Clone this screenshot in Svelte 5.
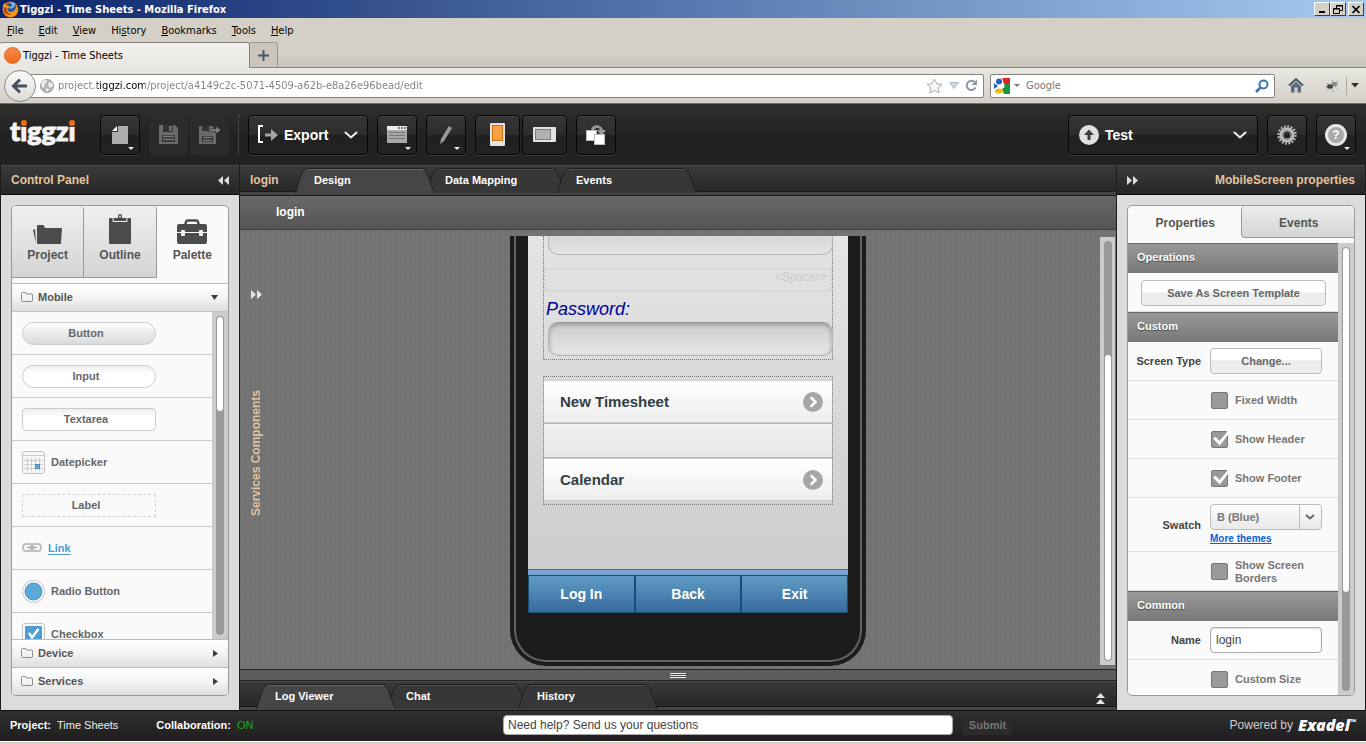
<script lang="ts">
  const menus = ['File', 'Edit', 'View', 'History', 'Bookmarks', 'Tools', 'Help'];
  // index of the underlined access key in each menu name
  const accessKeys = [0, 0, 0, 2, 0, 0, 0];

  const editorTabs = ['Design', 'Data Mapping', 'Events'];
  const logTabs = ['Log Viewer', 'Chat', 'History'];
  const phoneActions = ['Log In', 'Back', 'Exit'];

  let editorTab = $state('Design');
  let logTab = $state('Log Viewer');
  let name = $state('login');
  let fixedWidth = $state(false);
  let showHeader = $state(true);
  let showFooter = $state(true);
  let showBorders = $state(false);
  let customSize = $state(false);
</script>

{#snippet slantTab(label: string, active: boolean, onclick: () => void)}
  <button type="button" class="slant" class:active {onclick}>
    <svg width="140" height="25" viewBox="0 0 140 25" aria-hidden="true">
      <path class="shape" d="M0 25 C3 21 5 4 10 1.5 Q11 .5 14 .5 H126 Q129 .5 130 2 C134 7 136 20 140 25" />
      <path class="shine" d="M12 1.5 H128" />
    </svg>
    <span>{label}</span>
  </button>
{/snippet}

{#snippet folder()}
  <svg class="folder" width="12" height="10" viewBox="0 0 12 10" aria-hidden="true">
    <path d="M1.5 9.5 Q.5 9.5 .5 8.5 V1.5 Q.5 .5 1.5 .5 H4 Q5 .5 5.5 2 H10.5 Q11.5 2 11.5 3 V8.5 Q11.5 9.5 10.5 9.5 Z" fill="none" stroke="#8c8c8c" />
  </svg>
{/snippet}

{#snippet chevron()}
  <svg width="14" height="8" viewBox="0 0 14 8" aria-hidden="true">
    <path d="M1.5 1.5 L7 6.5 L12.5 1.5" fill="none" stroke="#f2f2f2" stroke-width="2" stroke-linecap="round" />
  </svg>
{/snippet}

{#snippet listArrow()}
  <svg width="20" height="20" viewBox="0 0 20 20" aria-hidden="true">
    <circle cx="10" cy="10" r="10" fill="#a6a6a6" />
    <path d="M8.5 6 L12.5 10 L8.5 14" fill="none" stroke="#fff" stroke-width="2.5" stroke-linecap="round" />
  </svg>
{/snippet}

<div class="window">
  <div class="titlebar">
    <svg width="17" height="17" viewBox="0 0 17 17" aria-hidden="true">
      <circle cx="8.5" cy="8.5" r="8" fill="#e36a10" />
      <circle cx="9" cy="7" r="5.5" fill="#27549c" />
      <path d="M7 2 Q11 3 10 5 L7 6 L9 8 L12 6 Q14 4 12 2 Q9 0 7 2" fill="#7cb8e8" />
      <path d="M1 4 L3 2 L4 4 L7 5 L7 7 L5 8 Q6 11 9 11 Q14 11 14 4 L16 8 Q15 15 9 16 Q2 16 1 9 Z" fill="#f39a1c" />
      <path d="M2 6 L5 7 L4 9 Q6 13 10 13 Q5 15 2 11 Z" fill="#b63d0c" />
    </svg>
    <h1>Tiggzi - Time Sheets - Mozilla Firefox</h1>
    <div class="controls">
      <button type="button" aria-label="Minimize"><svg width="10" height="9"><path d="M2 7 h6" stroke="#000" stroke-width="2" /></svg></button>
      <button type="button" aria-label="Restore"><svg width="10" height="9" viewBox="0 0 10 9"><path d="M3.5 3 V.5 H9.5 V5.5 H7 M3 1 H10 M.5 3.5 H6.5 V8.5 H.5 Z M0 4 H7" fill="none" stroke="#000" /></svg></button>
      <button type="button" aria-label="Close" class="close"><svg width="10" height="9" viewBox="0 0 10 9"><path d="M1.5 1 L8.5 8 M8.5 1 L1.5 8" stroke="#000" stroke-width="1.7" /></svg></button>
    </div>
  </div>

  <nav class="menubar">
    {#each menus as menu, i}
      <button type="button">{menu.slice(0, accessKeys[i])}<u>{menu[accessKeys[i]]}</u>{menu.slice(accessKeys[i] + 1)}</button>
    {/each}
  </nav>

  <div class="browser-tabs">
    <button type="button" class="browser-tab"><span class="favicon"></span>Tiggzi - Time Sheets</button>
    <button type="button" class="new-tab" aria-label="New tab">
      <svg width="11" height="11"><path d="M5.5 0 V11 M0 5.5 H11" stroke="#4a5566" stroke-width="2" /></svg>
    </button>
  </div>

  <div class="navbar">
    <button type="button" class="back" aria-label="Back">
      <svg width="18" height="16" viewBox="0 0 18 16"><path d="M9 1.5 L2.5 8 L9 14.5 M3 8 H16" fill="none" stroke="#46505f" stroke-width="3" /></svg>
    </button>
    <div class="urlbar">
      <svg width="14" height="14" viewBox="0 0 14 14" aria-hidden="true">
        <circle cx="7" cy="7" r="6.5" fill="#b4b4b4" stroke="#999" />
        <path d="M2 3 Q5 0 7 1 L6 4 L4 5 L5 7 L3 9 L1 6 Z M9 3 L12 4 L13 7 L10 9 L8 6 Z M6 9 L9 10 L8 13 L6 12 Z" fill="#eee" />
      </svg>
      <input aria-label="Address" value="project.tiggzi.com/project/a4149c2c-5071-4509-a62b-e8a26e96bead/edit" />
      <svg width="17" height="16" viewBox="0 0 17 16" aria-hidden="true"><path d="M8.5 1 L10.7 5.7 L16 6.3 L12 9.8 L13.2 15 L8.5 12.3 L3.8 15 L5 9.8 L1 6.3 L6.3 5.7 Z" fill="#fafafa" stroke="#aaa" /></svg>
      <svg width="10" height="7" viewBox="0 0 10 7" aria-hidden="true"><path d="M.5 .5 H9.5 L5 6.5 Z" fill="#cfd8e0" stroke="#aeb8c0" /></svg>
      <svg width="13" height="13" viewBox="0 0 13 13" aria-hidden="true"><path d="M10.5 8.5 A4.6 4.6 0 1 1 9.5 3" fill="none" stroke="#8b98a5" stroke-width="2" /><path d="M12 .5 V6 H6.5 Z" fill="#8b98a5" /></svg>
    </div>
    <div class="searchbar">
      <svg width="16" height="16" viewBox="0 0 16 16" aria-hidden="true">
        <rect width="16" height="16" fill="#fff" />
        <path d="M8 0 H16 V6 H10 Z" fill="#e32222" />
        <path d="M7 7 L16 5 V16 H10 Z" fill="#18983a" />
        <path d="M0 5 L4 8 L0 11 Z" fill="#1f5fc4" />
        <circle cx="5" cy="3.5" r="3" fill="#1f5fc4" />
        <circle cx="8" cy="8" r="2.5" fill="#fff" />
        <ellipse cx="5" cy="13" rx="4" ry="2.5" fill="#f6b817" />
      </svg>
      <svg width="6" height="3"><path d="M0 0 H6 L3 3 Z" fill="#777" /></svg>
      <input aria-label="Search" placeholder="Google" />
      <svg width="14" height="14" viewBox="0 0 14 14" aria-hidden="true"><circle cx="8.5" cy="5.5" r="4" fill="none" stroke="#3a76b0" stroke-width="2" /><path d="M5.5 8.5 L1 13" stroke="#3a76b0" stroke-width="2.5" /></svg>
    </div>
    <button type="button" class="plain" aria-label="Home">
      <svg width="16" height="15" viewBox="0 0 16 15"><path d="M1 7.5 L8 1.2 L15 7.5" fill="none" stroke="#4b5563" stroke-width="2" /><path d="M3 8 L8 3.7 L13 8 V14.5 H9.5 V9.5 H6.5 V14.5 H3 Z" fill="#5d6a7a" /></svg>
    </button>
    <div class="bug">
      <svg width="16" height="14" viewBox="0 0 16 14" aria-hidden="true">
        <path d="M1 8 L6 7 L3 12 M7 8 L9 13 M6 6 L2 4 M10 7 L14 10 M9 5 L8 1 M11 4 L15 2" fill="none" stroke="#a8a8a8" />
        <ellipse cx="6" cy="7.5" rx="3" ry="2.2" fill="#444" /><ellipse cx="10.5" cy="5" rx="3" ry="2" fill="#888" />
      </svg>
      <span></span>
      <svg width="8" height="5" aria-hidden="true"><path d="M0 0 H8 L4 4.5 Z" fill="#333" /></svg>
    </div>
  </div>

  <header class="toolbar">
    <div class="logo">t<span>i</span>ggz<span>i</span></div>
    <button type="button" class="tool" aria-label="New">
      <svg width="16" height="18" viewBox="0 0 16 18"><path d="M6 0 H16 V18 H0 V6 H6 Z" fill="#adadad" /><path d="M5 0 V5 H0 Z" fill="#fff" /></svg>
      <i class="more"></i>
    </button>
    <div class="pair">
      <button type="button" class="tool dim" aria-label="Save">
        <svg width="19" height="19" viewBox="0 0 19 19"><path d="M0 0 H16 L19 3 V19 H0 Z" fill="#6a6a6a" /><path d="M4 0 H14 V7 H4 Z" fill="#333" /><path d="M10 1 H13 V6 H10 Z" fill="#6a6a6a" /><path d="M3 10 H16 V17 H3 Z" fill="#333" /><path d="M4 11.5 H15 M4 14.5 H15" stroke="#777" stroke-width="1.5" /></svg>
      </button>
      <button type="button" class="tool dim" aria-label="Save as">
        <svg width="22" height="19" viewBox="0 0 22 19"><path d="M0 1 H14 L17 8 V19 H0 Z" fill="#6a6a6a" /><path d="M3 1 H10 V6 H3 Z M3 11 H14 V17 H3 Z" fill="#333" /><path d="M4 12.5 H13 M4 15.5 H13" stroke="#777" stroke-width="1.5" /><path d="M10 4 H17 V1 L22 5 L17 9 V6.500 H10 Z" fill="#858585" stroke="#2c2c2c" stroke-width=".6" /></svg>
      </button>
    </div>
    <span class="divider"></span>
    <button type="button" class="tool export">
      <svg width="20" height="20" viewBox="0 0 20 20" aria-hidden="true"><path d="M5 1 H1 V17 H5" fill="none" stroke="#fff" stroke-width="2" /><path d="M7 8.5 H13 V4 L20 10 L13 16 V11.5 H7 Z" fill="#a5a5a5" /></svg>
      <b>Export</b>
      {@render chevron()}
    </button>
    <button type="button" class="tool" aria-label="Screen">
      <svg width="20" height="17" viewBox="0 0 20 17"><rect width="20" height="17" fill="#a8a8a8" /><rect width="20" height="4" fill="#eee" /><path d="M11 2 h2 M14 2 h2 M17 2 h2" stroke="#555" stroke-width="1.5" /><path d="M2 6.5 H18 M2 9.5 H18 M2 12.5 H18" stroke="#777" /></svg>
      <i class="more"></i>
    </button>
    <button type="button" class="tool" aria-label="Edit">
      <svg width="12" height="18" viewBox="0 0 12 18"><path d="M9 0 L12 2 L4 15 L0 18 L1 13 Z" fill="#9b9b9b" /></svg>
      <i class="more"></i>
    </button>
    <div class="pair">
      <button type="button" class="tool wide" aria-label="Portrait">
        <svg width="15" height="23" viewBox="0 0 15 23"><rect width="15" height="23" rx="1" fill="#e2e2e2" /><rect x="2.5" y="2.5" width="10" height="15" fill="#fba040" stroke="#c67419" /></svg>
      </button>
      <button type="button" class="tool wide" aria-label="Landscape">
        <svg width="23" height="15" viewBox="0 0 23 15"><rect width="23" height="15" rx="1" fill="#e2e2e2" /><rect x="2.5" y="2.5" width="15" height="10" fill="#b0b0b0" stroke="#7c7c7c" /></svg>
      </button>
    </div>
    <button type="button" class="tool" aria-label="Swap">
      <svg width="20" height="20" viewBox="0 0 20 20"><rect x=".5" y="5.5" width="10" height="10" fill="#fff" stroke="#bbb" /><path d="M5 4 C7 -1 15 -1 17 5 H20 L15.5 11 L11 5 H14 C13 2 9 2 8 6 Z" fill="#9a9a9a" /><rect x="8.5" y="9.5" width="10" height="10" fill="#fff" stroke="#bbb" /></svg>
    </button>
    <span class="grow"></span>
    <button type="button" class="tool test">
      <svg width="20" height="20" viewBox="0 0 20 20" aria-hidden="true"><circle cx="10" cy="10" r="10" fill="#e0e0e0" /><path d="M10 4.5 L15 10 H11.5 V15 H8.5 V10 H5 Z" fill="#3c3c3c" /></svg>
      <b>Test</b>
      {@render chevron()}
    </button>
    <button type="button" class="tool" aria-label="Settings">
      <svg width="20" height="20" viewBox="0 0 20 20"><circle cx="10" cy="10" r="8.5" fill="none" stroke="#b4b4b4" stroke-width="2.5" stroke-dasharray="1.9 1.437" /><circle cx="10" cy="10" r="5.5" fill="none" stroke="#bdbdbd" stroke-width="4" /><circle cx="10" cy="10" r="4.5" fill="none" stroke="#808080" stroke-width="1" /></svg>
    </button>
    <button type="button" class="tool" aria-label="Help">
      <svg width="22" height="22" viewBox="0 0 22 22"><circle cx="11" cy="11" r="9.5" fill="#a8a8a8" stroke="#e6e6e6" stroke-width="3" /><text x="11" y="15" text-anchor="middle" font-size="12" font-weight="700" fill="#fff">?</text></svg>
      <i class="more"></i>
    </button>
  </header>

  <main>
    <aside class="side left">
      <div class="side-head">
        <h2>Control Panel</h2>
        <svg width="11" height="9" aria-hidden="true"><path d="M5 0 V9 L0 4.5 Z M11 0 V9 L6 4.5 Z" fill="#ddd" /></svg>
      </div>
      <div class="card">
        <div class="big-tabs">
          <button type="button">
            <svg width="29" height="20" viewBox="0 0 29 20" aria-hidden="true"><path d="M0 5 L2 4 L3 18 Z M4 1 Q4 0 5 0 H10 Q11 0 12 3 H28 Q29 3 29 4 L28 18 Q28 19 27 19 H5 Q4 19 4 18 Z" fill="#4b4b4b" /></svg>
            Project
          </button>
          <button type="button">
            <svg width="22" height="31" viewBox="0 0 22 31" aria-hidden="true"><path d="M1 4 H21 Q22 4 22 5 V29 Q22 30 21 30 H1 Q0 30 0 29 V5 Q0 4 1 4" fill="#4b4b4b" /><path d="M4 4 V7.5 H18 V4" fill="none" stroke="#f2f2f2" /><path d="M5 6.5 Q6 4 9 4 V2 Q9 0 11 0 Q13 0 13 2 V4 Q16 4 17 6.5 Z" fill="#4b4b4b" /><circle cx="11" cy="2.5" r="1" fill="#eee" /></svg>
            Outline
          </button>
          <button type="button" class="active">
            <svg width="30" height="26" viewBox="0 0 30 26" aria-hidden="true"><path d="M8.5 6 Q8.5 1.5 11 1.5 H19 Q21.5 1.5 21.5 6" fill="none" stroke="#4b4b4b" stroke-width="2.5" /><rect y="5" width="30" height="20" rx="2" fill="#4b4b4b" /><path d="M0 13.5 H30" stroke="#fafafa" /><rect x="4" y="11" width="4" height="6" rx="1" fill="#fafafa" /><rect x="22" y="11" width="4" height="6" rx="1" fill="#fafafa" /></svg>
            Palette
          </button>
        </div>
        <button type="button" class="group first">
          {@render folder()}
          <span>Mobile</span>
          <svg width="8" height="5" aria-hidden="true"><path d="M0 0 H7 L3.5 5 Z" fill="#3c3c3c" /></svg>
        </button>
        <div class="scroll-area">
          <ul class="palette">
            <li><span class="pill gray">Button</span></li>
            <li><span class="pill">Input</span></li>
            <li><span class="pill square">Textarea</span></li>
            <li>
              <svg width="23" height="23" viewBox="0 0 23 23" aria-hidden="true"><rect x=".5" y=".5" width="22" height="22" rx="2.5" fill="#f6f6f6" stroke="#c4c4c4" /><path d="M1 4.5 H22" stroke="#ccc" /><path d="M5.5 7 V20 M9.5 7 V20 M13.5 7 V20 M17.5 7 V20 M2 9.5 H21 M2 13.5 H21 M2 17.5 H21" stroke="#ccc" /><rect x="13.5" y="13.5" width="4" height="4" fill="#5ab0dc" stroke="#4590b8" /></svg>
              Datepicker
            </li>
            <li><span class="pill dashed">Label</span></li>
            <li>
              <svg width="20" height="10" viewBox="0 0 20 10" aria-hidden="true"><rect x="1" y="1" width="10" height="7" rx="3" fill="none" stroke="#c2c2c2" stroke-width="2" /><rect x="9" y="1" width="10" height="7" rx="3" fill="none" stroke="#c2c2c2" stroke-width="2" /><path d="M5 4.5 H15" stroke="#aaa" stroke-width="1.5" /></svg>
              <a href="#link">Link</a>
            </li>
            <li>
              <svg width="23" height="23" viewBox="0 0 23 23" aria-hidden="true"><circle cx="11.5" cy="11.5" r="11" fill="#fff" stroke="#c4c4c4" /><circle cx="11.5" cy="11.5" r="8.5" fill="#5aa9d8" stroke="#4591c4" /></svg>
              Radio Button
            </li>
            <li>
              <svg width="23" height="23" viewBox="0 0 23 23" aria-hidden="true"><rect x=".5" y=".5" width="22" height="22" rx="2.5" fill="#fff" stroke="#c4c4c4" /><rect x="3" y="3" width="17" height="17" rx="1" fill="#4d9fd2" /><path d="M7 10 L10 14.5 L16.5 6" fill="none" stroke="#fff" stroke-width="2.5" /></svg>
              Checkbox
            </li>
          </ul>
          <div class="track"><div class="rail"><div class="thumb" style="height: 30%"></div></div></div>
        </div>
        {#each ['Device', 'Services'] as label}
          <button type="button" class="group">
            {@render folder()}
            <span>{label}</span>
            <svg width="8" height="7" aria-hidden="true"><path d="M2 0 V7 L7 3.5 Z" fill="#3c3c3c" /></svg>
          </button>
        {/each}
      </div>
    </aside>

    <section class="editor">
      <div class="tabstrip">
        <h2>login</h2>
        {#each editorTabs as tab}
          {@render slantTab(tab, tab === editorTab, () => (editorTab = tab))}
        {/each}
      </div>
      <div class="screen-title">login</div>
      <div class="canvas">
        <div class="services">
          <svg width="11" height="9" aria-hidden="true"><path d="M0 0 V9 L5 4.5 Z M6 0 V9 L11 4.5 Z" fill="#e4e4e4" /></svg>
          <span>Services Components</span>
        </div>
        <div class="stage">
          <div class="phone">
            <div class="bezel">
              <div class="screen">
                <div class="content">
                  <div class="form">
                    <input class="cut" aria-label="User name" />
                    <div class="spacer">&lt;Spacer&gt;</div>
                    <label for="password">Password:</label>
                    <input id="password" type="password" />
                  </div>
                  <ul class="list">
                    <li><a href="#timesheet">New Timesheet</a>{@render listArrow()}</li>
                    <li class="empty"></li>
                    <li><a href="#calendar">Calendar</a>{@render listArrow()}</li>
                  </ul>
                </div>
                <div class="phone-foot">
                  {#each phoneActions as action}
                    <button type="button">{action}</button>
                  {/each}
                </div>
              </div>
            </div>
          </div>
        </div>
        <div class="track dark"><div class="rail end"><div class="thumb" style="height: 73%"></div></div></div>
      </div>
      <div class="resizer"><i></i></div>
      <div class="tabstrip logs">
        {#each logTabs as tab}
          {@render slantTab(tab, tab === logTab, () => (logTab = tab))}
        {/each}
        <svg class="expand" width="9" height="11" aria-hidden="true"><path d="M4.5 0 L9 5 H0 Z M4.5 6 L9 11 H0 Z" fill="#e4e4e4" /></svg>
      </div>
    </section>

    <aside class="side right">
      <div class="side-head">
        <svg width="11" height="9" aria-hidden="true"><path d="M0 0 V9 L5 4.5 Z M6 0 V9 L11 4.5 Z" fill="#ddd" /></svg>
        <h2>MobileScreen properties</h2>
      </div>
      <div class="card">
        <div class="prop-tabs">
          <button type="button" class="active">Properties</button>
          <button type="button">Events</button>
        </div>
        <div class="scroll-area">
          <div class="props">
            <h3>Operations</h3>
            <div class="row full"><button type="button" class="btn">Save As Screen Template</button></div>
            <h3>Custom</h3>
            <div class="row">
              <span class="key">Screen Type</span>
              <button type="button" class="btn">Change...</button>
            </div>
            <div class="row"><label class="check"><input type="checkbox" bind:checked={fixedWidth} />Fixed Width</label></div>
            <div class="row"><label class="check"><input type="checkbox" bind:checked={showHeader} />Show Header</label></div>
            <div class="row"><label class="check"><input type="checkbox" bind:checked={showFooter} />Show Footer</label></div>
            <div class="row swatch">
              <label class="key" for="swatch">Swatch</label>
              <div>
                <div class="select">
                  <select id="swatch"><option>B (Blue)</option></select>
                  <svg width="10" height="6" aria-hidden="true"><path d="M1 1 L5 4.5 L9 1" fill="none" stroke="#666" stroke-width="2" /></svg>
                </div>
                <a href="#themes">More themes</a>
              </div>
            </div>
            <div class="row"><label class="check"><input type="checkbox" bind:checked={showBorders} />Show Screen Borders</label></div>
            <h3>Common</h3>
            <div class="row">
              <label class="key" for="name">Name</label>
              <input id="name" class="text" bind:value={name} />
            </div>
            <div class="row"><label class="check"><input type="checkbox" bind:checked={customSize} />Custom Size</label></div>
          </div>
          <div class="track"><div class="rail"><div class="thumb" style="height: 78%"></div></div></div>
        </div>
      </div>
    </aside>
  </main>

  <footer>
    <div class="status">
      <span><b>Project:</b>Time Sheets</span>
      <span><b>Collaboration:</b><em>ON</em></span>
    </div>
    <input aria-label="Question" value="Need help? Send us your questions" />
    <button type="button" class="submit">Submit</button>
    <div class="powered">Powered by <strong>Exadel<sup>™</sup></strong></div>
  </footer>
  <div class="edge"></div>
</div>

<style>
  :global(body) {
    background: #d4d0c8;
  }
  .window {
    display: flex;
    flex-direction: column;
    height: 100vh;
    min-height: 700px;
    overflow: hidden;
    font: 11px "Liberation Sans", Arial, sans-serif;
    color: #555;
  }
  .window :global(*) {
    box-sizing: border-box;
  }
  button,
  input,
  select {
    appearance: none;
    margin: 0;
    padding: 0;
    border: 0;
    border-radius: 0;
    outline: 0;
    background: none;
    font: inherit;
    color: inherit;
  }
  button {
    cursor: pointer;
  }
  h1,
  h2,
  h3,
  ul {
    margin: 0;
    padding: 0;
    list-style: none;
  }
  svg {
    flex: none;
    display: block;
  }

  /* browser frame */
  .titlebar,
  .menubar,
  .browser-tabs,
  .navbar {
    flex: none;
    display: flex;
    align-items: center;
    font-family: "DejaVu Sans Condensed", Tahoma, sans-serif;
    color: #000;
  }
  .titlebar {
    height: 18px;
    padding: 0 2px;
    background: linear-gradient(90deg, #0a246a, #a6caf0);
  }
  .titlebar h1 {
    flex: 1;
    padding-left: 1px;
    font-size: 11px;
    color: #fff;
  }
  .controls {
    display: flex;
  }
  .controls button {
    display: grid;
    place-items: center;
    width: 16px;
    height: 14px;
    background: #d4d0c8;
    border: 1px solid;
    border-color: #fff #404040 #404040 #fff;
  }
  .controls .close {
    margin-left: 2px;
  }
  .menubar {
    height: 24px;
    gap: 15px;
    padding-left: 7px;
    background: #d4d0c8;
  }
  .browser-tabs {
    height: 26px;
    align-items: stretch;
    background: linear-gradient(#d4d0c8 50%, #c8c3bb);
    border-bottom: 1px solid #8a8782;
  }
  .browser-tab {
    display: flex;
    align-items: center;
    gap: 2px;
    width: 250px;
    margin-bottom: -1px;
    padding-left: 4px;
    background: linear-gradient(#f2f1ee, #e8e6e1);
    border: 1px solid #85827d;
    border-width: 1px 1px 0 0;
    border-radius: 3px 3px 0 0;
  }
  .favicon {
    width: 17px;
    height: 17px;
    border-radius: 50%;
    background: linear-gradient(#f58a4a, #ec6a1c);
    border: 1px solid #d86a28;
  }
  .new-tab {
    display: grid;
    place-items: center;
    width: 28px;
    background: #c9c5bd;
    border: 1px solid #9a968f;
    border-width: 1px 1px 0 0;
    border-radius: 0 3px 0 0;
  }
  .navbar {
    height: 36px;
    padding: 0 7px 0 4px;
    background: linear-gradient(#e9e7e2, #d4d0c8);
    border-bottom: 1px solid #6f7068;
  }
  .back {
    display: grid;
    place-items: center;
    flex: none;
    z-index: 1;
    width: 32px;
    height: 32px;
    border: 1px solid #8a8a8a;
    border-radius: 50%;
    background: linear-gradient(#fafafa, #dedcd8);
  }
  .urlbar,
  .searchbar {
    display: flex;
    align-items: center;
    height: 24px;
    background: #fff;
    border: 1px solid #85827d;
    border-radius: 2px;
  }
  .urlbar {
    flex: 1;
    gap: 6px;
    margin-left: -6px;
    padding: 0 5px 0 9px;
  }
  .urlbar input {
    flex: 1;
    min-width: 0;
    margin-left: -2px;
    /* the host stands out from the rest of the address */
    color: transparent;
    background: linear-gradient(90deg, #808080 39px, #000 39px 87px, #808080 87px);
    background-clip: text;
  }
  .searchbar {
    width: 285px;
    margin-left: 6px;
    padding: 0 5px 0 3px;
    gap: 4px;
  }
  .searchbar input {
    flex: 1;
    min-width: 0;
    padding-left: 2px;
  }
  .searchbar input::placeholder {
    color: #777;
    opacity: 1;
  }
  .plain {
    margin: 0 20px 0 13px;
  }
  .bug {
    display: flex;
    align-items: center;
    gap: 4px;
  }
  .bug span {
    height: 18px;
    margin-left: 2px;
    border-left: 1px solid #aaa7a0;
  }

  /* application toolbar */
  .toolbar {
    flex: none;
    display: flex;
    align-items: center;
    gap: 9px;
    height: 61px;
    padding: 0 10px;
    background: linear-gradient(#303030, #222 50%);
  }
  .logo {
    width: 81px;
    margin-top: -8px;
    font: 900 27px Lato, sans-serif;
    color: #f4f4f4;
    -webkit-text-stroke: 1px #f4f4f4;
  }
  .logo span {
    position: relative;
  }
  .logo span::before {
    content: "";
    position: absolute;
    left: 1px;
    top: 6px;
    width: 6px;
    height: 6px;
    border-radius: 50%;
    background: #f06a1d;
    box-shadow: 0 0 0 1px #272727;
  }
  .tool {
    position: relative;
    display: flex;
    align-items: center;
    justify-content: center;
    flex: none;
    width: 40px;
    height: 40px;
    background: linear-gradient(#363636, #2c2c2c 49%, #202020 50%, #232323);
    border: 1px solid #060606;
    border-radius: 4px;
    box-shadow: 0 1px 0 #3c3c3c, inset 0 1px 0 #444;
  }
  .tool.dim {
    width: 39px;
    background: #2b2b2b;
    border-color: #2b2b2b;
    box-shadow: none;
  }
  .tool.wide {
    width: 45px;
  }
  .pair {
    display: flex;
    gap: 2px;
  }
  .more {
    position: absolute;
    right: 5px;
    bottom: 4px;
    border: 3px solid transparent;
    border-top-color: #eee;
    border-bottom: 0;
  }
  .divider {
    height: 40px;
    border-left: 1px dotted #5c5c5c;
  }
  .export,
  .test {
    justify-content: flex-start;
    gap: 6px;
    padding: 0 9px;
    font-size: 14px;
    color: #fff;
  }
  .export {
    width: 120px;
  }
  .export b,
  .test b {
    flex: 1;
    text-align: left;
  }
  .test {
    width: 190px;
    padding: 0 10px;
  }
  .grow {
    flex: 1;
  }

  /* side panels */
  main {
    flex: 1;
    display: grid;
    grid-template-columns: 240px minmax(0, 1fr) 250px;
    min-height: 0;
  }
  .side {
    display: flex;
    flex-direction: column;
    min-height: 0;
    background: #dcdcdc;
    border: 1px solid #1c1c1c;
    border-width: 0 1px;
  }
  .side-head,
  .tabstrip {
    flex: none;
    display: flex;
    align-items: center;
    height: 30px;
    background: linear-gradient(#3a3a3a, #262626);
    border-top: 1px solid #4a4a4a;
  }
  .side-head {
    justify-content: space-between;
    padding: 0 10px;
    border-bottom: 1px solid #0c0c0c;
  }
  h2 {
    font-size: 12px;
    color: #e3c49f;
  }
  .card {
    flex: 1;
    display: flex;
    flex-direction: column;
    min-height: 0;
    margin: 10px 10px 14px;
    background: #fafafa;
    border: 1px solid #999;
    border-radius: 5px;
    overflow: hidden;
  }
  .big-tabs {
    flex: none;
    display: flex;
    height: 77px;
  }
  .big-tabs button {
    flex: 1;
    display: flex;
    flex-direction: column;
    align-items: center;
    justify-content: flex-end;
    gap: 3px;
    height: 72px;
    padding-bottom: 15px;
    font-size: 12px;
    font-weight: 700;
    background: linear-gradient(#f0f0f0, #d4d4d4);
    border: 1px solid #999;
    border-width: 0 1px 1px 0;
    border-radius: 0 4px 0 0;
  }
  .big-tabs .active {
    background: none;
    border: 0;
    padding-bottom: 16px;
  }
  .group {
    flex: none;
    display: flex;
    align-items: center;
    gap: 5px;
    height: 28px;
    padding: 0 9px 1px;
    font-weight: 700;
    background: linear-gradient(#fff, #f3f3f3 50%, #dedede);
    border-top: 1px solid #bbb;
  }
  .group.first {
    border-bottom: 1px solid #c4c4c4;
    height: 29px;
  }
  .group span {
    flex: 1;
    text-align: left;
  }
  .scroll-area {
    flex: 1;
    display: flex;
    min-height: 0;
  }
  .palette {
    flex: 1;
    overflow: hidden;
  }
  .palette li {
    display: flex;
    align-items: center;
    gap: 6px;
    height: 43px;
    padding-left: 10px;
    font-weight: 700;
    color: #666;
    border-bottom: 1px solid #ccc;
  }
  .palette a {
    color: #4b9bd2;
    text-underline-offset: 2px;
  }
  .pill {
    width: 134px;
    height: 23px;
    padding-right: 6px;
    line-height: 20px;
    text-align: center;
    border: 1px solid #ccc;
    border-radius: 12px;
    background: linear-gradient(#f0f0f0, #fff 40%);
  }
  .pill.gray {
    background: linear-gradient(#fff, #d8d9da);
  }
  .pill.square {
    border-radius: 4px;
  }
  .pill.dashed {
    border: 1px dashed #d4d4d4;
    border-radius: 0;
    background: none;
  }
  .track {
    flex: none;
    width: 16px;
    padding: 4px;
    background: #ccc;
  }
  .rail {
    display: flex;
    flex-direction: column;
    height: 100%;
    background: #999;
    border-radius: 4px;
  }
  .rail.end {
    justify-content: flex-end;
  }
  .thumb {
    background: #fff;
    border: 1px solid #999;
    border-radius: 4px;
  }

  /* centre column */
  .editor {
    display: flex;
    flex-direction: column;
    min-width: 0;
    min-height: 0;
  }
  .tabstrip {
    align-items: flex-start;
    padding: 2px 10px 0;
    border-bottom: 3px solid #444;
    box-shadow: inset 0 -1px 0 #181818;
  }
  .tabstrip h2 {
    width: 45px;
    line-height: 24px;
  }
  .slant {
    position: relative;
    width: 139px;
    height: 25px;
    margin-right: -8px;
    padding: 0 0 1px 19px;
    text-align: left;
    font-weight: 700;
    color: #fff;
  }
  .slant svg {
    position: absolute;
    inset: 0;
  }
  .slant span {
    position: relative;
  }
  .shape {
    fill: #373737;
    stroke: #1e1e1e;
  }
  .shine {
    stroke: #505050;
  }
  .slant.active {
    z-index: 1;
  }
  .active .shape {
    fill: #464646;
  }
  .active .shine {
    stroke: #666;
  }
  .screen-title {
    flex: none;
    height: 35px;
    padding-left: 36px;
    font-size: 12px;
    font-weight: 700;
    line-height: 33px;
    color: #fff;
    background: linear-gradient(#6a6768, #555);
    border-top: 1px solid #1c1c1c;
    border-bottom: 1px solid #404040;
  }
  .canvas {
    flex: 1;
    display: flex;
    min-height: 0;
    background-color: #757575;
    background-image:
      linear-gradient(#717171 1px, transparent 1px),
      linear-gradient(90deg, #717171 1px, transparent 1px);
    background-size: 5px 5px;
  }
  .services {
    flex: none;
    display: flex;
    flex-direction: column;
    gap: 91px;
    width: 36px;
    padding: 60px 0 0 11px;
    font-size: 12px;
    font-weight: 700;
    color: #e3c49f;
  }
  .services span {
    width: 10px;
    line-height: 10px;
    white-space: nowrap;
    writing-mode: vertical-rl;
    transform: rotate(180deg);
  }
  .stage {
    flex: 1;
    display: flex;
    justify-content: center;
    padding: 6px 0 3px;
  }
  .phone {
    width: 356px;
    padding: 0 4px 4px;
    background: #1c1c1c;
    border-radius: 0 0 36px 36px;
  }
  .bezel {
    height: 100%;
    padding: 0 12px 47px;
    border: 2px solid #636363;
    border-top: 0;
    border-radius: 0 0 32px 32px;
  }
  .screen {
    display: flex;
    flex-direction: column;
    height: 100%;
    background: linear-gradient(#e4e4e4, #cacaca);
  }
  .content {
    flex: 1;
    min-height: 0;
    padding: 0 15px;
    overflow: hidden;
  }
  .form {
    height: 124px;
    border: 1px dotted #777;
    border-top: 0;
  }
  .form input {
    display: block;
    width: 285px;
    height: 34px;
    margin-left: 4px;
    border: 1px solid #b4b4b4;
    border-top-color: #999;
    border-radius: 10px;
    background: linear-gradient(#cdcdcd, #e6e6e6);
    box-shadow: inset 0 2px 4px #999;
  }
  .form .cut {
    height: 19px;
    margin-bottom: 13px;
    border-top: 0;
    border-radius: 0 0 10px 10px;
    background: linear-gradient(#d8d8d8, #e4e4e4);
    box-shadow: none;
  }
  .spacer {
    height: 24px;
    padding-right: 3px;
    font-size: 12px;
    line-height: 15px;
    text-align: right;
    color: #cbcbcb;
    border: 2px dotted #d2d2d2;
  }
  .form label {
    display: block;
    height: 30px;
    padding-left: 2px;
    font: italic 18px/34px "Liberation Sans", Arial, sans-serif;
    color: #009;
  }
  .list {
    margin-top: 16px;
    padding: 3px 0;
    border: 1px dotted #777;
  }
  .list li {
    display: flex;
    align-items: center;
    justify-content: space-between;
    height: 43px;
    padding: 0 9px 0 16px;
    border: 1px solid #ccc;
    border-width: 1px 0;
    background: linear-gradient(#fff, #eee);
  }
  .list .empty {
    height: 35px;
    border-color: #b3b3b3;
    background: linear-gradient(#f0f0f0, #e6e8e9);
  }
  .list a {
    font-size: 15px;
    font-weight: 700;
    color: #2f3e46;
    text-decoration: none;
  }
  .phone-foot {
    flex: none;
    display: flex;
    padding-top: 5px;
    background: #7ba2cf;
    border-top: 1px solid #456f9a;
  }
  .phone-foot button {
    flex: 1;
    height: 38px;
    font-size: 14px;
    font-weight: 700;
    color: #fff;
    background: linear-gradient(#5f9cc5, #396b9e);
    border: 1px solid #145072;
  }
  .track.dark {
    width: 15px;
    margin: 7px 1px 4px 0;
    padding: 4px 3px 4px 4px;
  }
  .resizer {
    flex: none;
    display: grid;
    place-items: center;
    height: 12px;
    background: #5c5c5c;
    border: 1px solid #222;
    border-width: 1px 0;
  }
  .resizer i {
    width: 16px;
    height: 5px;
    background: repeating-linear-gradient(#eee 0 1px, #444 1px 2px);
  }
  .logs {
    height: 29px;
    padding-left: 16px;
  }
  .expand {
    margin: 9px 1px 0 auto;
  }

  /* properties */
  .prop-tabs {
    flex: none;
    display: flex;
    height: 37px;
  }
  .prop-tabs button {
    flex: 1;
    height: 32px;
    padding: 2px 0 0 2px;
    font-size: 12px;
    font-weight: 700;
    background: linear-gradient(#ededed, #d4d4d4);
    border: 1px solid #999;
    border-width: 0 0 1px 1px;
    border-radius: 4px 0 0 4px;
  }
  .prop-tabs .active {
    background: none;
    border: 0;
  }
  .props {
    flex: 1;
    min-width: 0;
    overflow: hidden;
  }
  h3 {
    height: 30px;
    padding-left: 9px;
    font-size: 11px;
    line-height: 26px;
    color: #fff;
    text-shadow: 0 1px 1px #444;
    background: linear-gradient(#999, #787878);
    border-top: 1px solid #666;
  }
  .row {
    display: grid;
    grid-template-columns: 73px 112px;
    column-gap: 9px;
    align-items: center;
    height: 39px;
    font-weight: 700;
    color: #777;
    border-bottom: 1px solid #e0e0e0;
  }
  .row.full {
    display: block;
    padding: 7px 12px 0 13px;
  }
  .key {
    text-align: right;
    color: #444;
  }
  .btn {
    width: 100%;
    height: 26px;
    font-weight: 700;
    color: #666;
    background: linear-gradient(#fff 45%, #ebebeb 50%, #efefef);
    border: 1px solid #bbb;
    border-radius: 4px;
  }
  .check {
    grid-column: 2;
    display: flex;
    align-items: center;
    gap: 7px;
    padding: 1px 0 0 1px;
    line-height: 13px;
  }
  .check input {
    position: relative;
    flex: none;
    width: 17px;
    height: 17px;
    background: #9a9a9a;
    border: 1px solid #777;
    border-radius: 2px;
  }
  .check input:checked::after {
    content: "";
    position: absolute;
    left: 1px;
    top: -1px;
    width: 17px;
    height: 15px;
    background: #fff;
    clip-path: polygon(0 50%, 15% 38%, 38% 66%, 88% 0, 100% 8%, 40% 96%);
  }
  .row.swatch {
    height: 54px;
  }
  .select {
    display: flex;
    align-items: center;
    height: 26px;
    padding-right: 6px;
    background: linear-gradient(#fff, #f2f2f2 50%, #e9e9e9);
    border: 1px solid #bbb;
    border-radius: 4px;
  }
  .select select {
    flex: 1;
    height: 24px;
    margin-right: 5px;
    padding-left: 6px;
    border-right: 1px solid #bbb;
  }
  .swatch a {
    display: block;
    margin-top: 2px;
    line-height: 13px;
    font-size: 10px;
    color: #0b61e0;
  }
  .text {
    height: 26px;
    padding-left: 5px;
    font-size: 12px;
    font-weight: 400;
    color: #444;
    background: #fff;
    border: 1px solid #aaa;
    border-radius: 4px;
    box-shadow: inset 0 1px 2px #ddd;
  }

  /* status bar */
  footer {
    flex: none;
    display: grid;
    grid-template-columns: 493px 450px auto 1fr;
    align-items: center;
    height: 31px;
    padding: 0 10px;
    color: #eee;
    background: linear-gradient(#303030, #1e1e1e);
    border-top: 1px solid #111;
  }
  .status {
    display: flex;
    gap: 38px;
    padding-bottom: 3px;
  }
  .status b {
    margin-right: 6px;
    color: #fff;
  }
  .status em {
    font-style: normal;
    color: #1eaa1e;
  }
  footer input {
    height: 20px;
    margin-bottom: 2px;
    padding-left: 4px;
    font-size: 12px;
    color: #444;
    background: #fff;
    border: 1px solid #aaa;
    border-radius: 4px;
  }
  .submit {
    width: 49px;
    height: 20px;
    margin: 0 0 3px 10px;
    font-weight: 700;
    color: #777;
    background: #2b2b2b;
    border-radius: 3px;
  }
  .powered {
    display: flex;
    align-items: center;
    justify-content: flex-end;
    gap: 5px;
    padding-bottom: 3px;
    font-size: 12px;
    line-height: 20px;
    color: #ccc;
  }
  .powered strong {
    font: italic 800 16px/20px "Open Sans", sans-serif;
    color: #fff;
  }
  .powered sup {
    font-size: 8px;
    line-height: 8px;
  }
  .edge {
    flex: none;
    height: 3px;
    background: #d4d0c8;
    border-top: 1px solid #fff;
  }
</style>
